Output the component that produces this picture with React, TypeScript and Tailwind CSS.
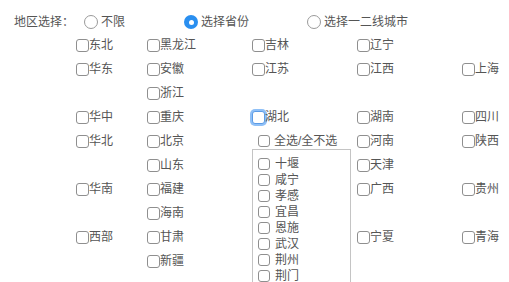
import { Fragment } from "react";

type Cell = { name: string; focus?: boolean } | null;

// laid out like the old float list: 5 columns, empty cells keep the gaps
const cells: Cell[] = [
  { name: "东北" }, { name: "黑龙江" }, { name: "吉林" }, { name: "辽宁" }, null,
  { name: "华东" }, { name: "安徽" }, { name: "江苏" }, { name: "江西" }, { name: "上海" },
  null, { name: "浙江" }, null, null, null,
  { name: "华中" }, { name: "重庆" }, { name: "湖北", focus: true }, { name: "湖南" }, { name: "四川" },
  { name: "华北" }, { name: "北京" }, { name: "河南" }, { name: "陕西" },
  null, { name: "山东" }, { name: "天津" }, null,
  { name: "华南" }, { name: "福建" }, { name: "广西" }, { name: "贵州" },
  null, { name: "海南" }, null, null,
  { name: "西部" }, { name: "甘肃" }, { name: "宁夏" }, { name: "青海" },
  null, { name: "新疆" },
];

const cities = ["十堰", "咸宁", "孝感", "宜昌", "恩施", "武汉", "荆州", "荆门"];

function Box({ focus = false, small = false }: { focus?: boolean; small?: boolean }) {
  return (
    <span
      className={`inline-block shrink-0 rounded-[3px] border bg-white ${
        small ? "w-[12px] h-[12px]" : "w-[13px] h-[13px]"
      } ${focus ? "border-[#5b9be6] shadow-[0_0_0_2px_#8fc0f7]" : "border-[#8f8f8f]"}`}
    />
  );
}

function Radio({ checked = false, label }: { checked?: boolean; label: string }) {
  return (
    <label className="flex items-center gap-[3px]">
      {checked ? (
        <span className="w-[14px] h-[14px] rounded-full bg-[#2a8ff0] flex items-center justify-center">
          <span className="w-[5px] h-[5px] rounded-full bg-white" />
        </span>
      ) : (
        <span className="w-[14px] h-[14px] rounded-full border border-[#9a9a9a] bg-white" />
      )}
      <span>{label}</span>
    </label>
  );
}

export default function App() {
  return (
    <div
      className="h-[282px] w-[509px] overflow-hidden bg-white pt-[11px] text-[12px] leading-[16px] text-[#555]"
      style={{ fontFamily: '"Liberation Sans", "Noto Sans CJK SC", sans-serif' }}
    >
      <div className="flex h-[22px] items-center pl-[14px]">
        <span className="w-[70px]">地区选择：</span>
        <div className="flex items-center">
          <Radio label="不限" />
          <span className="w-[59px]" />
          <Radio checked label="选择省份" />
          <span className="w-[58px]" />
          <Radio label="选择一二线城市" />
        </div>
      </div>

      <div className="ml-[76px] grid grid-cols-[71px_105px_105px_105px_105px] auto-rows-[24px]">
        {cells.map((c, i) => (
          <Fragment key={i}>
            {c ? (
              <label className="flex items-center">
                <Box focus={c.focus} />
                <span>{c.name}</span>
              </label>
            ) : (
              <span />
            )}
          </Fragment>
        ))}

        <div className="col-start-3 row-start-5 row-span-6 flex flex-col">
          <label className="mt-[4px] flex h-[16px] items-center gap-[4px] pl-[6px]">
            <Box small />
            <span>全选/全不选</span>
          </label>
          <div className="h-[150px] w-[99px] shrink-0 border border-[#c4c4c4] pl-[5px] pt-[6px]">
            {cities.map((c) => (
              <label key={c} className="flex h-[16px] items-center gap-[5px]">
                <Box small />
                <span>{c}</span>
              </label>
            ))}
          </div>
        </div>
      </div>
    </div>
  );
}
